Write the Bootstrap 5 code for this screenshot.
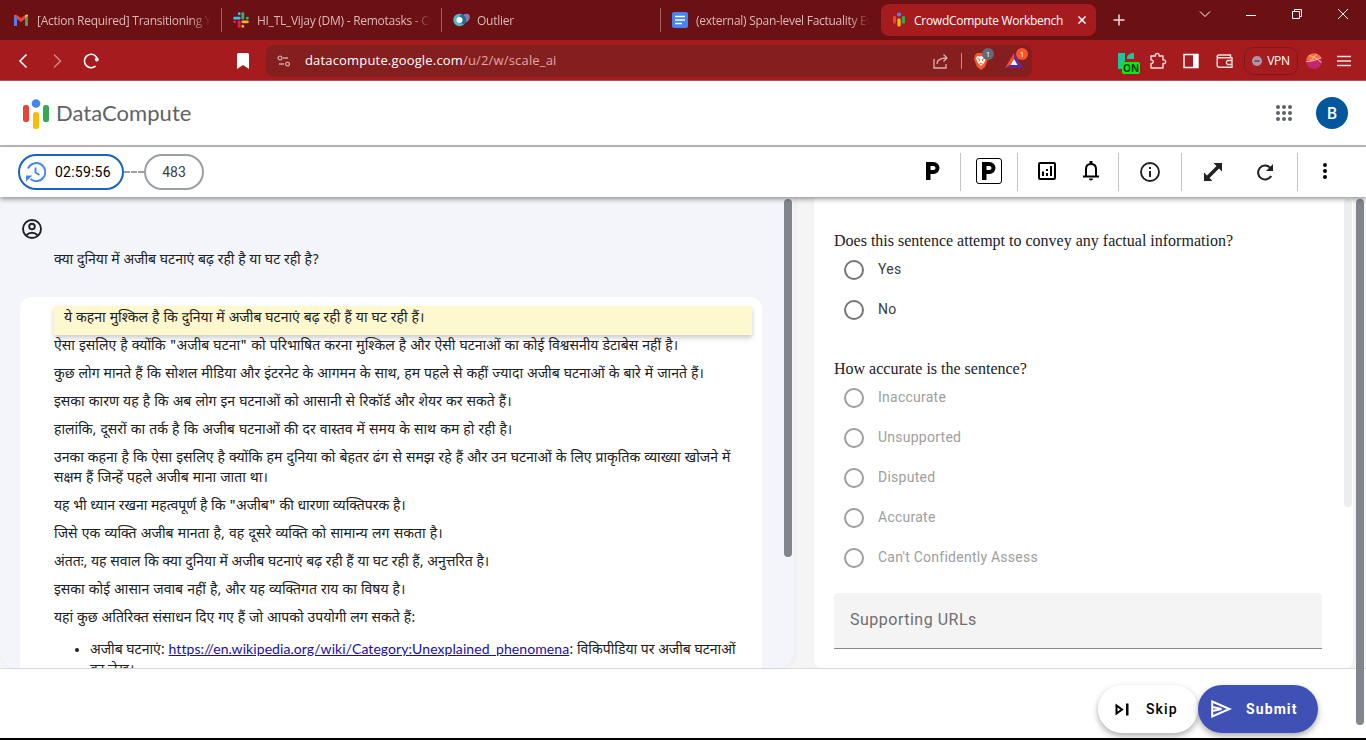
<!DOCTYPE html>
<html lang="en">
<head>
<meta charset="utf-8">
<title>CrowdCompute Workbench</title>
<link rel="stylesheet" href="https://cdn.jsdelivr.net/npm/bootstrap@5.3.0/dist/css/bootstrap.min.css">
<script src="https://cdn.jsdelivr.net/npm/bootstrap@5.3.0/dist/js/bootstrap.bundle.min.js"></script>
<style>
body{height:740px;overflow:hidden;font-family:Roboto,"Liberation Sans",sans-serif;font-size:14px;color:#202124;background:#fff}
svg{display:block;flex:none}
.tabstrip{height:40px;background:#6c1113;font-family:"Open Sans","Noto Sans",sans-serif;font-size:12px;color:#dcb9b9}
.tab-item{width:220px;height:32px;padding-left:12px;gap:7px}
.tab-item.sep{border-right:1px solid #a06262;height:24px}
.tab-label{white-space:nowrap;overflow:hidden;letter-spacing:-.27px;width:174px;padding-top:1px;-webkit-mask-image:linear-gradient(90deg,#000 88%,transparent 100%)}
.tab-item.current{background:#a61c1e;color:#fff;border-radius:8px;width:215px}
.current .tab-label{width:153px;-webkit-mask-image:none}
.winbtns{gap:32px;margin-bottom:12px}
.addrbar{height:41px;padding-top:1px;background:#a61c1e;border-bottom:1px solid #b35355;font-family:"Open Sans","Noto Sans",sans-serif}
.omnibox{width:766px;height:32px;background:#841e1f;border-radius:8px;font-size:13px;letter-spacing:.17px;color:#e0a9a9}
.count{top:-4px;left:9px;width:12px;height:12px;border-radius:50%;font-size:8px;line-height:12px;text-align:center;color:#fff}
.on-chip{left:4px;top:10px;width:18px;height:12px;background:#0bea16;color:#053b08;font:700 10px/13px "Open Sans",sans-serif;border-radius:2px;text-align:center}
.vpn{width:54px;height:28px;border:1px solid #811719;border-radius:9px;font-size:12px;letter-spacing:-.3px;color:#fff}
.apphead{height:66px;border-bottom:2px solid #bdbdbd}
.brand{font:400 22px Lato,sans-serif;letter-spacing:.05px;color:#5f6368;padding-bottom:2px}
.avatar{width:32px;height:32px;background:#01579b;color:#fff;font-size:16px;font-weight:500;padding-top:2px}
.toolrow{height:50px;box-shadow:0 2px 5px rgba(0,0,0,.42);z-index:3}
.timer{width:106px;height:36px;border:2px solid #1a63c4;border-radius:18px;color:#000;padding-left:6px;gap:9px;letter-spacing:.22px}
.tally{width:60px;height:36px;border:2px solid #9aa0a6;border-radius:18px;color:#3c4043}
.dash{width:20px;height:2px;background:repeating-linear-gradient(90deg,#a0a0a0 0 6px,transparent 6px 7px)}
.vline{width:1px;height:38px;background:#c4c4c4}
.raised{margin-bottom:3px}
.pbox{width:26px;height:26px;border:1px solid #000;border-radius:3px}
.stage{height:471px;background:#f5f5f5}
.leftpane{width:794px;background:#f4f5fb;border-radius:0 0 16px 16px;box-shadow:1px 0 5px rgba(0,0,0,.05);overflow:hidden}
.hi{font-family:"Noto Sans Devanagari","Noto Sans",Lato,sans-serif;font-size:14px;line-height:20px;color:#202124}
.answer{width:742px;height:380px;margin:25px 0 0 20px;background:#fff;border-radius:12px;padding:9px 10px 0 34px}
.sent{margin-bottom:8px;white-space:nowrap}
.sent.lit{background:#fdf8cd;height:29px;padding:3px 10px 0;margin-bottom:2px;box-shadow:0 3px 5px rgba(0,0,0,.2)}
.sources{padding-left:36px;margin-top:10px;white-space:nowrap}
.sources a{color:#1a0dab;font-family:Lato,sans-serif;letter-spacing:.07px}
.thumb{background:#80868b;border-radius:4px;width:8px}
.rightpane{width:539px;margin-left:20px;background:#fff;border-radius:0 0 8px 8px;box-shadow:0 0 5px rgba(0,0,0,.04)}
.ask{font:16px/20px "Liberation Serif",serif;color:#202124}
.opt{height:40px;padding:8px 0 0 10px;gap:14px;letter-spacing:.25px;color:#3c4043}
.ring{width:20px;height:20px;border:2px solid #757575;border-radius:50%;margin-top:1px}
.opt.off{color:#9e9e9e}.off .ring{border-color:#9e9e9e}
.urls{height:56px;width:488px;background:#f4f4f4;border-bottom:1px solid #8a8a8a;border-radius:4px 4px 0 0;padding:0 16px 2px;font-size:16px;letter-spacing:.5px;color:#6f6f6f}
.footbar{height:72px;border-top:1px solid #dadce0;border-bottom:2px solid #000;padding:16px 48px 0 0}
.pill{height:48px;border-radius:24px;font-weight:500;letter-spacing:1.1px;font-size:14px}
.skip{width:100px;background:#fff;color:#000;box-shadow:0 3px 6px rgba(0,0,0,.32)}
.submit{width:120px;background:#3f51b5;color:#fff;font-weight:700;box-shadow:0 3px 6px rgba(0,0,0,.32)}
.pagebar{top:199px;left:1355.5px;width:8px;height:526px;z-index:2}
</style>
</head>
<body class="position-relative">
<div class="tabstrip d-flex align-items-center">
  <div class="tab-item sep d-flex align-items-center" style="width:222px;padding-left:13px"><svg width="16" height="16" viewBox="0 0 16 16"><path d="M1 3v11h3V7l4 3 4-3v7h3V3l-2-.5L8 6 3 2.500z" fill="#ea4335"/><path d="M1 4v9.500h3V6z" fill="#4285f4"/><path d="M15 4v9.500h-3V6z" fill="#34a853"/><path d="M12 6l3-2.200c0-1.500-1.500-1.700-3-.4z" fill="#fbbc04"/></svg><span class="tab-label" style="margin-left:1px">[Action Required] Transitioning You</span></div>
  <div class="tab-item sep d-flex align-items-center" style="padding-left:11px"><svg width="16" height="16" viewBox="0 0 16 16" stroke-width="2.800" stroke-linecap="round"><path d="M6.200 1.600v.2M1.600 6.200h4.600" stroke="#36c5f0"/><path d="M9.800 1.600v4.600M14.200 6.200h.2" stroke="#2eb67d"/><path d="M9.800 9.800h4.600M9.800 14.200v.2" stroke="#ecb22e"/><path d="M6.200 9.800v4.600M1.600 9.800h.2" stroke="#e01e5a"/></svg><span class="tab-label" style="margin-left:1px">HI_TL_Vijay (DM) - Remotasks - Ch</span></div>
  <div class="tab-item sep d-flex align-items-center" style="width:219px;padding-left:11px"><svg width="17" height="16" viewBox="0 0 17 16"><ellipse cx="12" cy="6.500" rx="5.500" ry="4" fill="#8a78b4" transform="rotate(-45 12 6.500)"/><circle cx="6.500" cy="8" r="6.200" fill="#58b6cb"/><path d="M7 3a5 5 0 0 1 4 9L7 11z" fill="#246d96"/><circle cx="6.500" cy="8" r="3" fill="#fff"/></svg><span class="tab-label">Outlier</span></div>
  <div class="tab-item d-flex align-items-center" style="padding-left:11px"><svg width="16" height="16" viewBox="0 0 16 16"><rect width="16" height="16" rx="2" fill="#4285f4"/><path d="M3 4.500h10M3 8h10M3 11.500h7" stroke="#fff" stroke-width="1.700"/></svg><span class="tab-label" style="margin-left:1px">(external) Span-level Factuality Ev</span></div>
  <div class="tab-item current d-flex align-items-center" style="padding-left:11px"><svg width="14" height="16" viewBox="0 0 14 16"><rect x="1" y="4" width="3" height="7.500" rx="1" fill="#ea4335"/><circle cx="7" cy="2.500" r="2.100" fill="#5b7fe0"/><rect x="5.400" y="6.500" width="3.200" height="8" rx="1" fill="#fbbc04"/><rect x="10" y="4" width="3" height="7.500" rx="1" fill="#34a853"/></svg><span class="tab-label" style="margin-left:1px">CrowdCompute Workbench</span><svg width="16" height="16" viewBox="0 0 16 16"><path d="M4.500 4.500l7 7m0-7l-7 7" stroke="#fff" stroke-width="1.500"/></svg></div>
  <svg width="14" height="14" viewBox="0 0 14 14" style="margin-left:16px"><path d="M7 1.500v11M1.500 7h11" stroke="#eedede" stroke-width="1.500"/></svg>
  <div class="winbtns d-flex align-items-center ms-auto me-3">
    <svg width="14" height="14" viewBox="0 0 14 14"><path d="M2 4.500l5 5 5-5" stroke="#fff" fill="none"/></svg>
    <svg width="14" height="14" viewBox="0 0 14 14"><path d="M2 8.500h10" stroke="#fff"/></svg>
    <svg width="14" height="14" viewBox="0 0 14 14"><path d="M2.500 4.500h7v7h-7zM4.500 4.500v-2h7v7h-2" stroke="#fff" fill="none"/></svg>
    <svg width="14" height="14" viewBox="0 0 14 14"><path d="M2 2l10 10M12 2L2 12" stroke="#fff"/></svg>
  </div>
</div>
<div class="addrbar d-flex align-items-center">
  <svg width="104" height="18" viewBox="0 0 104 18" fill="none" stroke-width="1.600"><path d="M26.500 2.500L20 9l6.500 6.500" stroke="#fff"/><path d="M54 2.500L60.500 9 54 15.500" stroke="#d07f80"/><path d="M95.600 4A6.700 6.700 0 1 0 95.600 14" stroke="#fff"/><path d="M95 3.500q2.300 2 2.300 4" stroke="#fff"/><circle cx="96.800" cy="7.600" r="2" fill="#fff"/></svg>
  <svg width="12" height="16" viewBox="0 0 12 16" style="margin-left:133px"><path d="M1.500 0h9q1.500 0 1.500 1.500V16l-6-4-6 4V1.500Q0 0 1.500 0z" fill="#fff"/></svg>
  <div class="omnibox d-flex align-items-center" style="margin-left:17px">
    <svg width="14" height="14" viewBox="0 0 14 14" fill="none" stroke="#cfa6a6" stroke-width="1.300" style="margin-left:11px"><circle cx="3" cy="4" r="1.900"/><path d="M6 4h5M2 10h5"/><circle cx="10.500" cy="10" r="1.900"/></svg>
    <span style="margin-left:14px"><span class="text-white">datacompute.google.com</span>/u/2/w/scale_ai</span>
    <svg class="ms-auto" width="18" height="18" viewBox="0 0 18 18" fill="none" stroke="#d9b0b0" stroke-width="1.300"><path d="M2 7v9h12v-4M5 12c0-4 3-6 10-6M11.500 2.500L15 6l-3.500 3.500"/></svg>
    <div style="width:1px;height:16px;background:#bd8f8f;margin:0 11px 0 11px"></div>
    <div class="position-relative" style="margin-right:16px"><svg width="16" height="18" viewBox="0 0 16 18"><path d="M4 1h8l2 2 1 4-3 8-4 3-4-3L1 7l1-4z" fill="#fb542b"/><path d="M4 4l2.500.5L8 4l1.500.500L12 4l1 2.500-2 4.500-3 3-3-3-2-4.500z" fill="#fff"/><path d="M4.500 6.500l2.500 1-1 1.800M11.500 6.500L9 7.500l1 1.800M6.500 12L8 11l1.500 1" stroke="#fb542b" fill="none"/></svg><span class="count position-absolute" style="background:#5f6b78">1</span></div>
    <div class="position-relative" style="margin-right:9px"><svg width="18" height="16" viewBox="0 0 18 16"><path d="M9 0L0 15h18z" fill="#662d91"/><path d="M9 0L0 15l9-5z" fill="#ff4724"/><path d="M0 15h18L9 10z" fill="#5b2a92"/><path d="M9 6l-3.500 6h7z" fill="#fff"/></svg><span class="count position-absolute" style="background:#fb542b;left:11px;top:-5px">1</span></div>
  </div>
  <div class="position-relative" style="margin-left:86px;width:20px"><svg width="16" height="18" viewBox="0 0 16 18"><path d="M0 1h7v8l-2 2v6H0z" fill="#22c29a"/><path d="M9 6c0-3 3-5 7-5v6H9z" fill="#22c29a"/></svg><span class="on-chip position-absolute">ON</span></div>
  <svg width="18" height="18" viewBox="0 0 18 18" fill="none" stroke="#f3dede" stroke-width="1.400" stroke-linejoin="round" style="margin-left:11px"><path d="M2 4h4.500c-1-3.500 4.500-3.500 3.500 0h4v4c3.500-1 3.500 4.500 0 3.500V16H2v-4.500c3 .5 3-4 0-3.500z"/></svg>
  <svg width="16" height="16" viewBox="0 0 16 16" style="margin-left:16px"><path d="M1 1.500h14v13H1z" fill="none" stroke="#fff" stroke-width="1.400"/><path d="M10 1h5v14h-5z" fill="#fff"/></svg>
  <svg width="18" height="16" viewBox="0 0 18 16" fill="none" stroke="#f3dede" stroke-width="1.400" style="margin-left:17px"><path d="M14.500 4.500V2H3Q1.200 2 1.200 3.300T3 4.700h13v9.600H3q-1.800 0-1.800-1.800V3.500M16 7.500h-4.500q-2.300 2 0 4H16"/></svg>
  <div class="vpn d-flex align-items-center justify-content-center" style="margin-left:10px;gap:5px"><svg width="10" height="10" viewBox="0 0 10 10"><circle cx="5" cy="5" r="5" fill="#ad94a8"/><path d="M2.500 5h5" stroke="#6b4054" stroke-width="1.500"/></svg>VPN</div>
  <svg width="16" height="16" viewBox="0 0 16 16" style="margin-left:8px"><circle cx="8" cy="8" r="8" fill="#c32670"/><path d="M.2 7A8 8 0 0 1 15.300 5L5 8z" fill="#ff6a35"/><path d="M.2 8.500C6 8.500 11 7 15.200 4.500M3 2.500c4 1 8 3 12.500 7M4 8.500L11 1" stroke="#ffc4a4" fill="none"/></svg>
  <svg width="14" height="12" viewBox="0 0 14 12" style="margin-left:15px"><path d="M0 1.500h14M0 6h14M0 10.500h14" stroke="#f3dede" stroke-width="1.400"/></svg>
</div>
<header class="apphead d-flex align-items-center">
  <svg width="26" height="30" viewBox="0 0 26 30" style="margin:2px 0 0 23px"><rect y="6" width="6" height="17" rx="2.500" fill="#ea4335"/><circle cx="13" cy="4.500" r="4.300" fill="#4285f4"/><rect x="10" y="13" width="6" height="17" rx="2.500" fill="#fbbc04"/><rect x="20" y="6" width="6" height="17" rx="2.500" fill="#34a853"/></svg>
  <span class="brand" style="margin-left:7px">DataCompute</span>
  <svg class="ms-auto" width="16" height="16" viewBox="0 0 16 16" fill="#5f6368"><circle cx="2" cy="2" r="2"/><circle cx="8" cy="2" r="2"/><circle cx="14" cy="2" r="2"/><circle cx="2" cy="8" r="2"/><circle cx="8" cy="8" r="2"/><circle cx="14" cy="8" r="2"/><circle cx="2" cy="14" r="2"/><circle cx="8" cy="14" r="2"/><circle cx="14" cy="14" r="2"/></svg>
  <div class="avatar rounded-circle d-flex align-items-center justify-content-center" style="margin:0 18px 0 24px">B</div>
</header>
<div class="toolrow d-flex align-items-center bg-white position-relative">
  <div class="timer d-flex align-items-center" style="margin-left:18px"><svg width="20" height="20" viewBox="0 0 20 20" fill="none" stroke="#4285f4" stroke-width="1.900"><path d="M2 6.500A9 9 0 1 1 4.500 17M9.500 5.500v5l4 2.500"/><path d="M0 13.500h6.500l-6.500 6z" fill="#4285f4" stroke="none"/></svg><span>02:59:56</span></div>
  <div class="dash"></div>
  <div class="tally d-flex align-items-center justify-content-center">483</div>
  <div class="ms-auto d-flex align-items-center">
    <svg class="raised" width="14" height="18" viewBox="0 0 14 18"><path d="M0 0h7.500a6 6 0 0 1 0 12H4.500V18H0zM4.500 4v4h3a2 2 0 0 0 0-4z" fill-rule="evenodd"/></svg>
    <div class="vline" style="margin:0 15px 0 20px"></div>
    <div class="pbox raised d-flex align-items-center justify-content-center"><svg width="14" height="18" viewBox="0 0 14 18"><path d="M0 0h7.500a6 6 0 0 1 0 12H4.500V18H0zM4.500 4v4h3a2 2 0 0 0 0-4z" fill-rule="evenodd"/></svg></div>
    <div class="vline" style="margin:0 20px 0 15px"></div>
    <svg class="raised" width="18" height="18" viewBox="0 0 18 18" fill="none" stroke="#000" stroke-width="2"><rect x="1" y="1" width="16" height="16" rx="1"/><path d="M5 9.500V14M9 11v3M9 7v2M13 4v10"/></svg>
    <svg class="raised" width="16" height="20" viewBox="0 0 16 20" style="margin-left:27px"><path d="M0 15.500h16M3 15V8q0-5 5-5t5 5v7" fill="none" stroke="#000" stroke-width="2"/><path d="M6.500 0h3v3h-3zM6 17.500h4a2 2 0 0 1-4 0z"/></svg>
    <div class="vline" style="margin:0 21px 0 19px"></div>
    <svg width="20" height="20" viewBox="0 0 20 20"><circle cx="10" cy="10" r="9" fill="none" stroke="#202124" stroke-width="1.900"/><path d="M9 5h2v2H9zM9 9h2v6H9z" fill="#202124"/></svg>
    <div class="vline" style="margin:0 22px 0 21px"></div>
    <svg width="18" height="18" viewBox="0 0 18 18" fill="#202124"><path d="M9.500 0H18v8.500l-3-3L5.500 15l3 3H0V9.500l3 3L12.500 3z"/></svg>
    <svg width="17" height="17" viewBox="0 0 17 17" style="margin-left:35px"><path d="M13 3.500A7 7 0 1 0 14.200 12" fill="none" stroke="#202124" stroke-width="2"/><path d="M16 0v7H9z" fill="#202124"/></svg>
    <div class="vline" style="margin:0 24px 0 23px"></div>
    <svg class="raised" width="6" height="18" viewBox="0 0 6 18" style="margin-right:38px"><circle cx="3" cy="3" r="2"/><circle cx="3" cy="9" r="2"/><circle cx="3" cy="15" r="2"/></svg>
  </div>
</div>
<main class="stage d-flex">
  <section class="leftpane d-flex">
    <div style="width:784px">
      <svg width="20" height="20" viewBox="0 0 20 20" fill="none" stroke="#202124" stroke-width="1.900" style="margin:22px 0 0 22px"><circle cx="10" cy="10" r="9"/><circle cx="10" cy="7.500" r="2.800"/><path d="M4 16.500q6-5.500 12 0"/></svg>
      <div class="hi" style="margin:11px 0 0 54px;padding-top:1px;height:22px;word-spacing:.1px">क्या दुनिया में अजीब घटनाएं बढ़ रही है या घट रही है?</div>
      <div class="answer hi">
        <div class="sent lit" style="word-spacing:.33px">ये कहना मुश्किल है कि दुनिया में अजीब घटनाएं बढ़ रही हैं या घट रही हैं।</div>
        <div class="sent" style="word-spacing:.47px">ऐसा इसलिए है क्योंकि "अजीब घटना" को परिभाषित करना मुश्किल है और ऐसी घटनाओं का कोई विश्वसनीय डेटाबेस नहीं है।</div>
        <div class="sent" style="word-spacing:.36px">कुछ लोग मानते हैं कि सोशल मीडिया और इंटरनेट के आगमन के साथ, हम पहले से कहीं ज्यादा अजीब घटनाओं के बारे में जानते हैं।</div>
        <div class="sent" style="word-spacing:.43px">इसका कारण यह है कि अब लोग इन घटनाओं को आसानी से रिकॉर्ड और शेयर कर सकते हैं।</div>
        <div class="sent" style="word-spacing:.47px">हालांकि, दूसरों का तर्क है कि अजीब घटनाओं की दर वास्तव में समय के साथ कम हो रही है।</div>
        <div class="sent" style="word-spacing:.4px">उनका कहना है कि ऐसा इसलिए है क्योंकि हम दुनिया को बेहतर ढंग से समझ रहे हैं और उन घटनाओं के लिए प्राकृतिक व्याख्या खोजने में<br>सक्षम हैं जिन्हें पहले अजीब माना जाता था।</div>
        <div class="sent">यह भी ध्यान रखना महत्वपूर्ण है कि "अजीब" की धारणा व्यक्तिपरक है।</div>
        <div class="sent" style="word-spacing:.65px">जिसे एक व्यक्ति अजीब मानता है, वह दूसरे व्यक्ति को सामान्य लग सकता है।</div>
        <div class="sent" style="word-spacing:.06px">अंततः, यह सवाल कि क्या दुनिया में अजीब घटनाएं बढ़ रही हैं या घट रही हैं, अनुत्तरित है।</div>
        <div class="sent" style="word-spacing:.42px">इसका कोई आसान जवाब नहीं है, और यह व्यक्तिगत राय का विषय है।</div>
        <div class="sent" style="word-spacing:.27px">यहां कुछ अतिरिक्त संसाधन दिए गए हैं जो आपको उपयोगी लग सकते हैं:</div>
        <ul class="sources"><li>अजीब घटनाएं: <a href="#">https://en.wikipedia.org/wiki/Category:Unexplained_phenomena</a>: विकिपीडिया पर अजीब घटनाओं<br>का लेख।</li></ul>
      </div>
    </div>
    <div class="thumb" style="height:358px;margin-top:2px"></div>
  </section>
  <section class="rightpane d-flex">
    <div style="width:530px;padding:34px 0 0 20px">
      <div class="ask">Does this sentence attempt to convey any factual information?</div>
      <div class="opt d-flex"><span class="ring"></span><span>Yes</span></div>
      <div class="opt d-flex"><span class="ring"></span><span>No</span></div>
      <div class="ask" style="margin-top:28px">How accurate is the sentence?</div>
      <div class="opt off d-flex"><span class="ring"></span><span>Inaccurate</span></div>
      <div class="opt off d-flex"><span class="ring"></span><span>Unsupported</span></div>
      <div class="opt off d-flex"><span class="ring"></span><span>Disputed</span></div>
      <div class="opt off d-flex"><span class="ring"></span><span>Accurate</span></div>
      <div class="opt off d-flex"><span class="ring"></span><span>Can't Confidently Assess</span></div>
      <div class="urls d-flex align-items-center" style="margin-top:14px">Supporting URLs</div>
    </div>
    <div class="thumb" style="height:308px;margin-top:2px;background:#ebedef"></div>
  </section>
</main>
<footer class="footbar d-flex justify-content-end">
  <div class="pill skip d-flex align-items-center"><svg width="14" height="13" viewBox="0 0 14 13" style="margin-left:17px"><path d="M1.500 2.500v8l5.500-4z" fill="none" stroke="#000" stroke-width="2"/><path d="M11 .5h2.500v12H11z"/></svg><span style="margin-left:17px">Skip</span></div>
  <div class="pill submit d-flex align-items-center"><svg width="21" height="18" viewBox="0 0 21 18" style="margin-left:13px"><path d="M1.200 1.500L18.500 9 1.200 16.500zM1.500 7l9 2-9 2" fill="none" stroke="#fff" stroke-width="2"/></svg><span style="margin-left:14px">Submit</span></div>
</footer>
<div class="pagebar thumb position-absolute"></div>
</body>
</html>
